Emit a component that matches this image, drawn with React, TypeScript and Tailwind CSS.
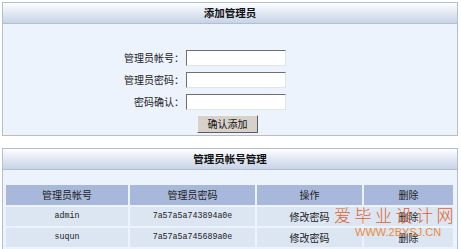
const cjk = { fontFamily: '"Noto Sans CJK SC", "Liberation Sans", sans-serif' };

const admins = [
  { name: 'admin', pwd: '7a57a5a743894a0e' },
  { name: 'suqun', pwd: '7a57a5a745689a0e' },
];

function PanelHeader({ title }: { title: string }) {
  return (
    <div className="h-[21px] border-b border-[#b4bfcd] bg-gradient-to-b from-[#fdfeff] to-[#c7d3e7] flex items-center justify-center">
      <span className="text-[10.5px] font-bold text-[#111] leading-none">{title}</span>
    </div>
  );
}

function Field({ label }: { label: string }) {
  return (
    <div className="flex items-center h-[16px] pl-[97px]">
      <span className="w-[84px] text-right text-[10px] leading-none text-[#222]">{label}</span>
      <input
        className="block ml-[2px] w-[100px] h-[16px] bg-white border border-t-[#6f6f6f] border-l-[#6f6f6f] border-b-[#e4e4e4] border-r-[#e4e4e4] outline-none"
        type="text"
      />
    </div>
  );
}

export default function App() {
  return (
    <div className="relative w-[461px] h-[249px] overflow-hidden bg-white pt-[2px] px-[2px] leading-none" style={cjk}>
      {/* 添加管理员 */}
      <div className="w-[456px] h-[134px] border border-[#b4bfcd] bg-[#edf3fc]">
        <PanelHeader title="添加管理员" />
        <div className="flex flex-col gap-[6px] pt-[26px]">
          <Field label="管理员帐号：" />
          <Field label="管理员密码：" />
          <Field label="密码确认：" />
        </div>
        <div className="flex pl-[194px] pt-[5px]">
          <button className="flex items-center justify-center w-[61px] h-[18px] bg-[#d6d2ca] border border-t-[#f4f4f4] border-l-[#f4f4f4] border-b-[#5e5e5e] border-r-[#5e5e5e] text-[10px] leading-none text-[#111]">
            确认添加
          </button>
        </div>
      </div>

      {/* 管理员帐号管理 */}
      <div className="mt-[12px] w-[456px] h-[120px] border border-[#b4bfcd] bg-[#edf3fc]">
        <PanelHeader title="管理员帐号管理" />
        <div className="pt-[15px] pl-[3px]">
          <div className="grid grid-cols-[122px_125px_105px_89px] gap-[2px] text-[10px] text-[#222]">
            {['管理员帐号', '管理员密码', '操作', '删除'].map((h) => (
              <div key={h} className="h-[20px] bg-[#a8b8da] flex items-center justify-center leading-none">
                {h}
              </div>
            ))}
            {admins.map((a) => (
              <div key={a.name} className="contents">
                <div className="h-[19px] bg-[#dce6f2] flex items-center justify-center leading-none text-[8.3px]" style={{ fontFamily: '"Liberation Mono", monospace' }}>
                  {a.name}
                </div>
                <div className="h-[19px] bg-[#dce6f2] flex items-center justify-center leading-none text-[8.3px]" style={{ fontFamily: '"Liberation Mono", monospace' }}>
                  {a.pwd}
                </div>
                <div className="h-[19px] bg-[#dce6f2] flex items-center justify-center leading-none">修改密码</div>
                <div className="h-[19px] bg-[#dce6f2] flex items-center justify-center leading-none">删除</div>
              </div>
            ))}
          </div>
        </div>
      </div>

      {/* watermark */}
      <div className="absolute left-[334px] top-[206px] pointer-events-none">
        <div className="text-[17px] leading-none tracking-[3.5px] text-[#e0602a] font-light">爱毕业设计网</div>
        <div className="mt-[4px] ml-[21px] text-[11px] leading-none text-[#e98a3c]" style={{ fontFamily: '"Liberation Sans", sans-serif' }}>
          WWW.2BYSJ.CN
        </div>
      </div>
    </div>
  );
}
